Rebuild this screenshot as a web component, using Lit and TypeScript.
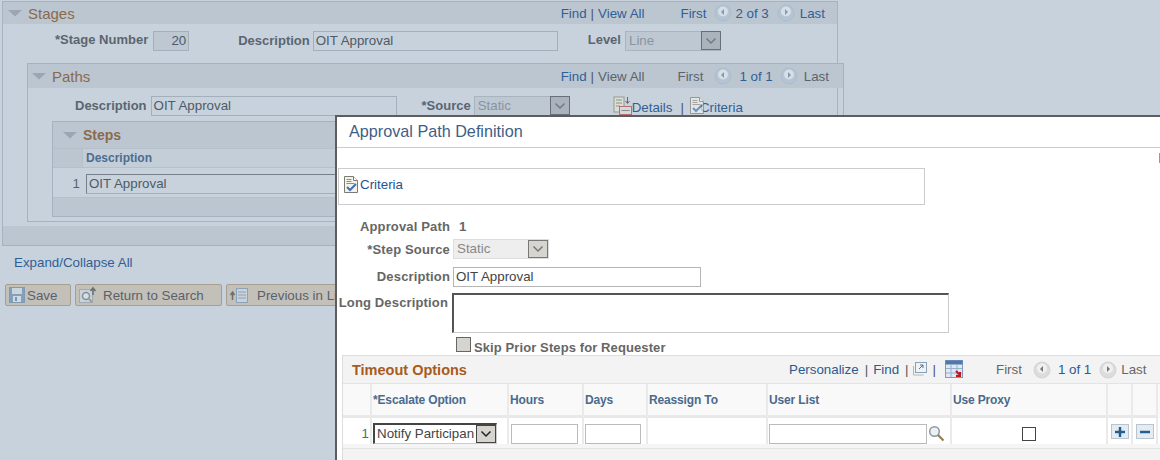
import { LitElement, html, css, svg } from "lit";
import { customElement } from "lit/decorators.js";

const navBtn = (dir: "l" | "r") => html`<svg class="nav" width="18" height="18" viewBox="0 0 18 18">
  <circle class="o" cx="9" cy="9" r="8"/>
  <circle class="i" cx="9" cy="7.500" r="5"/>
  ${dir === "l" ? svg`<path class="a" d="M10 5v6L7 8z"/>` : svg`<path class="a" d="M8 5v6L11 8z"/>`}
</svg>`;

const criteriaIcon = html`<svg width="16" height="19" viewBox="0 0 16 19">
  <path d="M1.500 1.500h9l4 4v12h-13z" fill="#f3f1ea" stroke="#7b7b72"/>
  <path d="M10.500 1.500v4h4" fill="#fff" stroke="#7b7b72"/>
  <path d="M3.500 4.500h5M3.500 6.500h5M3.500 8.500h8" stroke="#8d8d85"/>
  <path d="M4 12l3 3 6-6" fill="none" stroke="#3f6fb5" stroke-width="2"/>
</svg>`;

const detailsIcon = html`<svg width="20" height="20" viewBox="0 0 20 20">
  <rect x="1" y="1" width="10" height="15" fill="#e4e6d5" stroke="#7c8068"/>
  <path d="M3 4h6M3 7h6M3 10h4" stroke="#6d7158"/>
  <path d="M14.500 1v6M12.500 5l2 2.500 2-2.500" fill="none" stroke="#333"/>
  <rect x="6.500" y="10.500" width="12" height="8" fill="#dcdcdc" stroke="#b43c3c"/>
  <path d="M8.500 14.500h8" stroke="#666"/>
</svg>`;

const popIcon = html`<svg width="17" height="18" viewBox="0 0 17 18">
  <rect x="4.500" y="1.500" width="11" height="10" fill="#eef3f8" stroke="#8aa0b5"/>
  <path d="M2.500 5v9h10" fill="none" stroke="#a9b8c6"/>
  <path d="M8 8l4-4M9 4h3v3" fill="none" stroke="#5d6f82"/>
</svg>`;

const gridIcon = html`<svg width="19" height="20" viewBox="0 0 19 20">
  <rect x="0.500" y="0.500" width="17" height="17" fill="#dfe8f4" stroke="#7f9bc0"/>
  <rect x="0.500" y="0.500" width="17" height="4" fill="#4f78ad"/>
  <path d="M6 4v13M12 4v13M1 8.500h16M1 13h16" stroke="#9ab0cc"/>
  <path d="M11 11l4 4M15 12v4h-4" fill="none" stroke="#c2171c" stroke-width="2"/>
</svg>`;

const saveIcon = html`<svg width="16" height="16" viewBox="0 0 16 16">
  <rect x="0.500" y="0.500" width="15" height="15" fill="#5d90c4" stroke="#5f87ad"/>
  <rect x="3" y="1" width="10" height="6" fill="#cfe0ee"/>
  <rect x="4" y="9" width="8" height="6" fill="#dfe7ee"/>
  <rect x="6" y="10" width="2" height="4" fill="#4d7fb0"/>
</svg>`;

const searchBackIcon = html`<svg width="20" height="18" viewBox="0 0 20 18">
  <rect x="0.500" y="3.500" width="13" height="13" fill="#d4dce4" stroke="#8aa0b5"/>
  <circle cx="7" cy="10" r="3.500" fill="#e6eef4" stroke="#54789c" stroke-width="1.500"/>
  <path d="M10 13l3 3" stroke="#a28a3c" stroke-width="2"/>
  <path d="M14 9V3M11.500 5L14 2l2.500 3" fill="none" stroke="#3a4450" stroke-width="1.500"/>
</svg>`;

const prevListIcon = html`<svg width="18" height="16" viewBox="0 0 18 16">
  <path d="M2.500 13V6M.5 8l2-3 2 3" fill="none" stroke="#3a4450" stroke-width="1.500"/>
  <rect x="6.500" y="1.500" width="11" height="14" fill="#cfdde9" stroke="#6e93b8"/>
  <path d="M8 5h8M8 8h8M8 11h8" stroke="#6e93b8"/>
</svg>`;

const magnifier = html`<svg width="17" height="17" viewBox="0 0 17 17">
  <circle cx="6.500" cy="6.500" r="4.800" fill="#eaf0f4" stroke="#8b98a3" stroke-width="1.500"/>
  <path d="M10 10l5.500 5.500" stroke="#8c8050" stroke-width="2.200"/>
</svg>`;

const arrow = html`<svg width="12" height="8" viewBox="0 0 12 8"><path d="M1.500 1.500L6 6l4.500-4.500" fill="none" stroke="currentColor" stroke-width="1.500"/></svg>`;
const tri = html`<svg class="tri" width="16" height="8" viewBox="0 0 16 8"><path d="M1 1h14L8 7.500z" fill="#9aa6b3"/></svg>`;

@customElement("app-root")
export class AppRoot extends LitElement {
  static styles = css`
    :host { display: block; width: 1160px; height: 460px; overflow: hidden; position: relative;
      background: #c8d2dc; font: 13.33px "Liberation Sans", Arial, sans-serif; color: #59636e; }
    * { box-sizing: border-box; }
    a { color: #2f5f96; text-decoration: none; }
    b { font-weight: bold; }
    .sep { color: #4e5862; margin: 0 5px; }
    .nav { display: block; }
    .nav .o { fill: #b4c4d4; stroke: #aebccb; }
    .nav .i { fill: #d5dfe8; }
    .nav .a { fill: #8d98a6; }
    .dim { display: flex; opacity: .65; }
    .panel { border: 1px solid #a6b2be; }
    .head { display: flex; align-items: center; background: #bcc6d0; color: #8a6a4c; }
    .head .title { font-size: 15px; }
    .tri { flex: none; }
    .pager { display: flex; align-items: center; margin-left: auto; color: #59636e; }
    .box { height: 20px; border: 1px solid #a3afbb; padding: 0 2px; line-height: 18px; color: #4f5a66; white-space: nowrap; overflow: hidden; }
    .sel { display: flex; height: 20px; border: 1px solid #a9b4bf; background: #bec8d2; color: #8a949f; line-height: 18px; padding-left: 3px; justify-content: space-between; }
    .sel .btn { width: 20px; height: 19px; margin-top: -1px; margin-right: -1px; display: flex; align-items: center; justify-content: center; background: #aab3bc; border: 1px solid #66707a; color: #707a86; }
    .row { display: flex; align-items: center; }
    .lbl { font-weight: bold; font-size: 13px; color: #5b6570; white-space: nowrap; }

    .stages { margin: 1px 0 0 2px; width: 836px; height: 245px; display: flex; flex-direction: column; }
    .stages > .head { height: 22px; padding: 0 12px 0 4px; }
    .stages > .head .title { margin-left: 5px; }
    .stage-row { height: 39px; padding: 7px 0 0 52px; align-items: flex-start; }
    .stage-row .lbl { margin-top: 1px; }
    .paths { margin-left: 24px; width: 817px; height: 159px; position: relative; }
    .paths > .head { height: 24px; padding: 0 14px 0 3px; }
    .paths > .head .title { margin-left: 5px; }
    .path-row { height: 33px; padding: 8px 0 0 47px; align-items: flex-start; }
    .path-row .lbl { margin-top: 2px; }
    .steps { margin-left: 24px; width: 760px; height: 96px; display: flex; flex-direction: column; }
    .steps .head { height: 26px; padding-left: 9px; }
    .steps .head b { margin-left: 5px; font-size: 14px; }
    .steps .cols { height: 20px; display: flex; background: #c4ced8; border-top: 1px solid #b5c0cb; border-bottom: 1px solid #b5c0cb; }
    .steps .cols .n { width: 30px; background: #bcc6d0; border-right: 1px solid #b5c0cb; }
    .steps .cols b { color: #4c6d90; font-size: 12px; line-height: 18px; padding-left: 3px; }
    .steps .rowline { height: 30px; padding-top: 2px; display: flex; align-items: center; border-bottom: 1px solid #b5c0cb; }
    .steps .rowline .n { width: 30px; text-align: right; padding-right: 3px; }
    .steps .rowline .box { margin-left: 3px; width: 600px; border-left-color: #77818b; border-top-color: #77818b; }
    .steps .foot { flex: 1; background: #bcc6d0; }
    .band { margin-top: auto; height: 19px; background: #bcc6d0; }
    .expand { display: block; margin: 9px 0 0 14px; line-height: 15px; }
    .buttons { display: flex; margin: 14px 0 0 5px; gap: 4px; }
    .button { height: 22px; display: flex; align-items: center; border: 1px solid #a89f90; border-radius: 2px; background: #c3c0b9; color: #58626d; padding-left: 3px; white-space: nowrap; }

    .modal { position: absolute; left: 335px; top: 115px; width: 840px; height: 360px; background: #fff; border-left: 2px solid #5d5d5d; border-top: 2px solid #5d5d5d; color: #666; }
    .modal .nav .o { fill: #dcdcdc; stroke: #d4d4d4; }
    .modal .nav .i { fill: #f0f0f0; }
    .modal .nav .a { fill: #777; }
    .m-title { height: 31px; border-bottom: 1px solid #ccc; padding-left: 12px; font-size: 16.200px; line-height: 28px; color: #3f6085; }
    .mark { position: absolute; left: 822px; top: 36px; width: 3px; height: 10px; background: #999; }
    .crit { margin: 20px 0 0 1px; width: 587px; height: 37px; border: 1px solid #ccc; display: flex; align-items: center; padding: 0 0 5px 4px; color: #2a5a92; }
    .crit a { color: #1f5391; margin-left: 1px; }
    .m-row { display: flex; align-items: center; }
    .m-row .lbl { width: 113px; text-align: right; color: #666; letter-spacing: .15px; }
    .m-box { height: 20px; border: 1px solid #b5b5b5; line-height: 18px; padding: 0 2px; color: #444; }
    .m-sel { width: 96px; height: 20px; display: flex; justify-content: space-between; border: 1px solid #ddd; background: #eee; color: #888; padding-left: 3px; line-height: 18px; }
    .m-sel .btn { width: 20px; height: 18px; background: #d6d4ce; border: 1px solid #777; color: #777; display: flex; align-items: center; justify-content: center; }
    .ta { width: 497px; height: 40px; border: 1px solid #ccc; border-top: 2px solid #555; border-left: 2px solid #555; margin-left: 4px; }
    .skip { display: flex; align-items: center; margin: 4px 0 0 119px; height: 15px; }
    .cb { width: 15px; height: 15px; background: #d6d4ce; border: 1px solid #666; margin-right: 3px; }
    .skip b { margin-top: 5px; font-size: 13px; color: #666; letter-spacing: .1px; }

    .grid { margin: 3px 0 0 5px; width: 830px; height: 110px; border: 1px solid #ddd; background: #f3f3f3; }
    .g-head { height: 27px; display: flex; align-items: center; padding-left: 9px; position: relative; }
    .g-head .t { font-size: 14.500px; font-weight: bold; color: #a85b1c; }
    .g-tools { position: absolute; left: 446px; top: 0; height: 27px; display: flex; align-items: center; white-space: nowrap; }
    .g-tools a { color: #2a5a92; }
    .g-tools .sep { margin: 0 5px 0 6px; }
    .cols { display: grid; grid-template-columns: 29px 137px 75px 64px 120px 184px 156px 25px 25px; }
    .hdr { height: 35px; background: #f9f9f9; border-top: 1px solid #e4e4e4; }
    .hdr > div { border-right: 2px solid #eaeaea; border-bottom: 3px solid #e8e8e8; font-weight: bold; font-size: 12px; letter-spacing: -.15px; color: #4b6a8c; padding: 9px 0 0 1px; }
    .rw { height: 26px; background: #fff; }
    .rw > div { border-right: 2px solid #eaeaea; display: flex; align-items: flex-end; }
    .rw .n { align-items: center; justify-content: flex-end; padding: 4px 1px 0 0; }
    .pad { height: 5px; background: #f5f5f5; border-bottom: 1px solid #e4e4e4; }
    .dd { margin-left: 1px; width: 124px; height: 21px; display: flex; justify-content: space-between; border: 1px solid #ccc; border-top: 2px solid #444; border-left: 2px solid #444; color: #444; padding-left: 2px; line-height: 18px; white-space: nowrap; background: #fff; }
    .dd .btn { flex: none; width: 20px; height: 18px; background: #d6d4ce; border: 1px solid #444; color: #222; display: flex; align-items: center; justify-content: center; }
    .mini { height: 20px; border: 1px solid #bbb; background: #fff; margin-left: 1px; }
    .chk { width: 14px; height: 14px; border: 1px solid #444; margin: 0 auto 3px; background: #fff; }
    .pm { width: 18px; height: 15px; margin: 0 0 5px 3px; background: #e4ebf2; border: 1px solid #b8c4d0; color: #23608f; display: flex; align-items: center; justify-content: center; }
  `;

  render() {
    return html`
      <div class="stages panel">
        <div class="head">
          ${tri}<span class="title">Stages</span>
          <div class="pager">
            <a>Find</a><span class="sep" style="margin:0 4px">|</span><a>View All</a>
            <a style="margin-left:36px">First</a><span style="margin:0 3px 0 8px">${navBtn("l")}</span>
            <a>2 of 3</a><span style="margin:0 5px 0 8px">${navBtn("r")}</span><a>Last</a>
          </div>
        </div>
        <div class="row stage-row">
          <span class="lbl">*Stage Number</span>
          <div class="box" style="width:36px;margin-left:5px;text-align:right;background:#bec8d2">20</div>
          <span class="lbl" style="margin-left:49px;margin-top:2px">Description</span>
          <div class="box" style="width:245px;margin-left:3px">OIT Approval</div>
          <span class="lbl" style="margin-left:30px">Level</span>
          <div class="sel" style="width:96px;margin-left:4px">Line<span class="btn">${arrow}</span></div>
        </div>
        <div class="paths panel">
          <div class="head">
            ${tri}<span class="title">Paths</span>
            <div class="pager">
              <a>Find</a><span class="sep" style="margin:0 4px">|</span><span>View All</span>
              <span style="margin-left:33px">First</span><span style="margin:0 7px 0 11px">${navBtn("l")}</span>
              <a>1 of 1</a><span style="margin:0 6px 0 7px">${navBtn("r")}</span><span>Last</span>
            </div>
          </div>
          <div class="row path-row">
            <span class="lbl">Description</span>
            <div class="box" style="width:246px;margin-left:4px">OIT Approval</div>
            <span class="lbl" style="margin-left:25px">*Source</span>
            <div class="sel" style="width:96px;margin-left:3px">Static<span class="btn">${arrow}</span></div>
            <span class="dim" style="margin-left:43px">${detailsIcon}</span><a style="margin-top:4px;margin-left:-1px">Details</a>
            <span class="sep" style="margin:4px 5px 0 8px">|</span>
            <span class="dim">${criteriaIcon}</span><a style="margin-top:4px;margin-left:-5px">Criteria</a>
          </div>
          <div class="steps panel">
            <div class="head">${tri}<b>Steps</b></div>
            <div class="cols"><div class="n"></div><b>Description</b></div>
            <div class="rowline"><div class="n">1</div><div class="box">OIT Approval</div></div>
            <div class="foot"></div>
          </div>
        </div>
        <div class="band"></div>
      </div>
      <a class="expand">Expand/Collapse All</a>
      <div class="buttons">
        <div class="button" style="width:66px"><span class="dim">${saveIcon}</span><span style="margin-left:2px">Save</span></div>
        <div class="button" style="width:147px"><span class="dim">${searchBackIcon}</span><span style="margin-left:4px">Return to Search</span></div>
        <div class="button" style="width:130px"><span class="dim">${prevListIcon}</span><span style="margin-left:9px">Previous in List</span></div>
      </div>

      <div class="modal">
        <div class="m-title">Approval Path Definition</div>
        <div class="mark"></div>
        <div class="crit">${criteriaIcon}<a>Criteria</a></div>
        <div class="m-row" style="margin-top:12px;height:18px">
          <span class="lbl">Approval Path</span><b style="margin-left:9px;color:#666">1</b>
        </div>
        <div class="m-row" style="margin-top:4px">
          <span class="lbl">*Step Source</span>
          <div class="m-sel" style="margin-left:3px">Static<span class="btn">${arrow}</span></div>
        </div>
        <div class="m-row" style="margin-top:8px">
          <span class="lbl" style="margin-top:-1px">Description</span>
          <div class="m-box" style="width:248px;margin-left:3px">OIT Approval</div>
        </div>
        <div class="m-row" style="margin-top:6px;align-items:flex-start">
          <span class="lbl" style="margin-top:2px;width:111px">Long Description</span>
          <div class="ta"></div>
        </div>
        <div class="skip"><div class="cb"></div><b>Skip Prior Steps for Requester</b></div>
        <div class="grid">
          <div class="g-head">
            <span class="t">Timeout Options</span>
            <div class="g-tools">
              <a>Personalize</a><span class="sep">|</span><a>Find</a><span class="sep" style="margin:0 2px 0 6px">|</span>
              ${popIcon}<span class="sep" style="margin:0 9px 0 5px">|</span>${gridIcon}
              <span style="margin-left:32px">First</span><span style="margin:0 7px 0 11px">${navBtn("l")}</span>
              <a>1 of 1</a><span style="margin:0 4px 0 8px">${navBtn("r")}</span><span>Last</span>
            </div>
          </div>
          <div class="cols hdr">
            <div></div><div>*Escalate Option</div><div>Hours</div><div>Days</div><div>Reassign To</div>
            <div>User List</div><div>Use Proxy</div><div></div><div></div>
          </div>
          <div class="cols rw">
            <div class="n">1</div>
            <div><div class="dd"><span>Notify Participan</span><span class="btn">${arrow}</span></div></div>
            <div><div class="mini" style="width:67px;margin-left:2px"></div></div>
            <div><div class="mini" style="width:56px"></div></div>
            <div></div>
            <div><div class="mini" style="width:158px"></div><span style="display:flex;margin:0 0 2px 1px">${magnifier}</span></div>
            <div><div class="chk"></div></div>
            <div><div class="pm">
              <svg width="10" height="10" viewBox="0 0 10 10"><path d="M5 0v10M0 5h10" stroke="currentColor" stroke-width="2.500"/></svg>
            </div></div>
            <div><div class="pm">
              <svg width="10" height="10" viewBox="0 0 10 10"><path d="M0 5h10" stroke="currentColor" stroke-width="2.500"/></svg>
            </div></div>
          </div>
          <div class="pad"></div>
        </div>
      </div>
    `;
  }
}
